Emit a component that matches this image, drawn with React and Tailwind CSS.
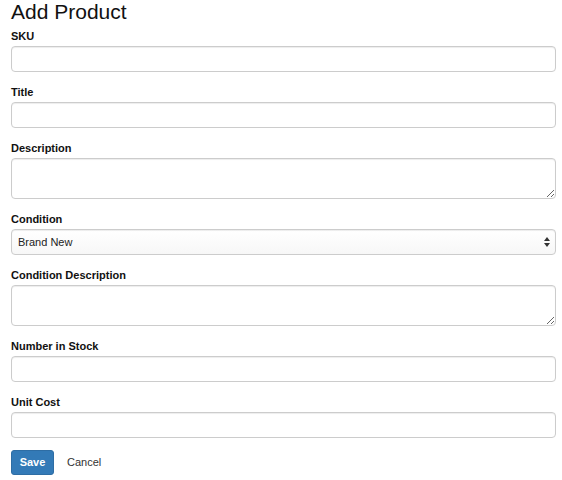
const font = { fontFamily: '"Liberation Sans", Arial, sans-serif' };

const inputCls =
  'block w-full rounded-[4px] border border-[#cccccc] px-[7px] text-[11px] shadow-[inset_0_1px_1px_rgba(0,0,0,0.075)] outline-none';

const Field = ({ label, children, last }) => (
  <div className={last ? 'mb-[12px]' : 'mb-[14px]'}>
    <label className="mb-[4px] block text-[11px] font-bold leading-[12px] text-[#111]">{label}</label>
    {children}
  </div>
);

const App = () => {
  return (
    <div className="min-h-[480px] bg-white text-[#333]" style={font}>
      <div className="ml-[11px] w-[545px]">
        <h1 className="mb-[6px] text-[21px] leading-[24px] font-normal text-[#111]">Add Product</h1>

        <Field label="SKU">
          <input className={`${inputCls} h-[26px] bg-white text-[#555]`} />
        </Field>
        <Field label="Title">
          <input className={`${inputCls} h-[26px] bg-white text-[#555]`} />
        </Field>
        <Field label="Description">
          <textarea className={`${inputCls} h-[41px] bg-white py-1 text-[#555]`} />
        </Field>
        <Field label="Condition">
          <div className="relative">
            <select
              className={`${inputCls} h-[26px] appearance-none bg-gradient-to-b from-white to-[#f7f7f7] pl-[6px] text-[#222]`}
              defaultValue="new"
            >
              <option value="new">Brand New</option>
              <option value="used">Used</option>
            </select>
            <svg
              className="pointer-events-none absolute right-[6px] top-[8px]"
              width="6"
              height="10"
              viewBox="0 0 6 10"
            >
              <path d="M3 0 L6 4 L0 4 Z" fill="#333" />
              <path d="M3 10 L6 6 L0 6 Z" fill="#333" />
            </svg>
          </div>
        </Field>
        <Field label="Condition Description">
          <textarea className={`${inputCls} h-[41px] bg-white py-1 text-[#555]`} />
        </Field>
        <Field label="Number in Stock">
          <input className={`${inputCls} h-[26px] bg-white text-[#555]`} />
        </Field>
        <Field label="Unit Cost" last>
          <input className={`${inputCls} h-[26px] bg-white text-[#555]`} />
        </Field>

        <div className="flex items-center gap-[13px]">
          <button className="h-[25px] w-[43px] rounded-[3px] border border-[#2e6da4] bg-[#337ab7] text-[11px] font-bold text-white">
            Save
          </button>
          <span className="text-[11px] text-[#333]">Cancel</span>
        </div>
      </div>
    </div>
  );
};

export default App;
